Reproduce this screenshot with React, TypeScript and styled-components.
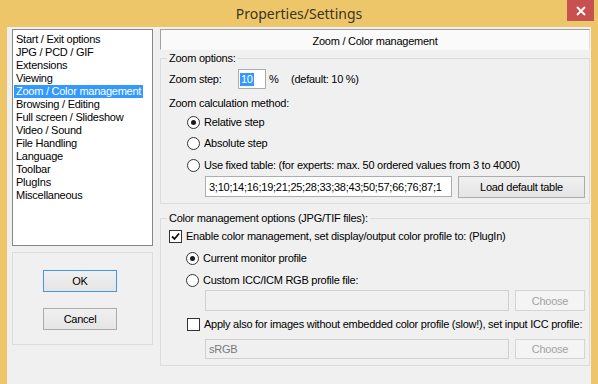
import React from "react";
import styled, { createGlobalStyle } from "styled-components";

const Global = createGlobalStyle`
  html, body { margin: 0; padding: 0; background: #ffffff; }
  body { font-family: "Liberation Sans", Arial, sans-serif; font-size: 11px; letter-spacing: -0.25px; color: #000; }
  * { box-sizing: border-box; }
`;

const Window = styled.div`
  width: 598px;
  height: 384px;
  overflow: hidden;
  display: flex;
  flex-direction: column;
  background: #eec66a;
`;

const TitleBar = styled.div`
  height: 27px;
  flex: none;
  display: grid;
  grid-template-columns: 1fr auto 1fr;
  align-items: start;
`;

const Title = styled.div`
  grid-column: 2;
  font-family: "Noto Sans", "Open Sans", sans-serif;
  font-size: 14px;
  letter-spacing: 0;
  line-height: 27px;
  color: #3c3522;
`;

const CloseButton = styled.div`
  grid-column: 3;
  justify-self: end;
  width: 27px;
  height: 21px;
  margin-right: 4px;
  background: #c75050;
  display: flex;
  align-items: center;
  justify-content: center;
`;

const Body = styled.div`
  flex: 1;
  margin: 0 7px;
  background: #f0f0f0;
  display: flex;
  gap: 7px;
  padding: 2px 0 0 5px;
`;

const LeftCol = styled.div`
  width: 141px;
  display: flex;
  flex-direction: column;
  gap: 6px;
`;

const ListBox = styled.div`
  height: 217px;
  background: #ffffff;
  border: 1px solid #828790;
  padding: 3px 0 0 1px;
  display: flex;
  flex-direction: column;
`;

const ListItem = styled.div<{ $selected?: boolean }>`
  width: fit-content;
  height: 13px;
  line-height: 13px;
  padding: 0 2px;
  white-space: nowrap;
  background: ${(p) => (p.$selected ? "#3399ff" : "transparent")};
  color: ${(p) => (p.$selected ? "#ffffff" : "#000000")};
`;

const ButtonGroup = styled.div`
  height: 93px;
  border: 1px solid #dcdcdc;
  display: flex;
  flex-direction: column;
  align-items: flex-start;
  gap: 16px;
  padding: 17px 0 0 30px;
`;

const Button = styled.button<{ $w: number; $h?: number; $default?: boolean; $disabled?: boolean }>`
  width: ${(p) => p.$w}px;
  height: ${(p) => p.$h ?? 22}px;
  flex: none;
  margin: 0;
  padding: 0;
  font: inherit;
  font-size: 11px;
  letter-spacing: -0.25px;
  color: ${(p) => (p.$disabled ? "#a3a3a3" : "#000000")};
  border: 1px solid ${(p) => (p.$default ? "#3c9ae6" : p.$disabled ? "#d5d5d5" : "#acacac")};
  background: ${(p) =>
    p.$disabled ? "#f4f4f4" : "linear-gradient(#f0f0f0, #e5e5e5)"};
  display: flex;
  align-items: center;
  justify-content: center;
`;

const RightCol = styled.div`
  width: 430px;
  display: flex;
  flex-direction: column;
`;

const PageHeader = styled.div`
  height: 21px;
  border: 1px solid;
  border-color: #a0a0a0 #e0e0e0 #f8f8f8 #a0a0a0;
  background: #fafafa;
  display: flex;
  justify-content: center;
  align-items: center;
  padding-top: 2px;
`;

const GroupBox = styled.div<{ $mt: number; $pb: number }>`
  position: relative;
  margin-top: ${(p) => p.$mt}px;
  border: 1px solid #dcdcdc;
  padding: 0 0 ${(p) => p.$pb}px 8px;
  display: flex;
  flex-direction: column;
`;

const GroupTitle = styled.span`
  position: absolute;
  top: -7px;
  left: 6px;
  padding: 0 2px;
  line-height: 13px;
  background: #f0f0f0;
  white-space: nowrap;
`;

const Row = styled.div<{ $h: number; $mt?: number; $indent?: number }>`
  display: flex;
  align-items: center;
  height: ${(p) => p.$h}px;
  margin-top: ${(p) => p.$mt ?? 0}px;
  padding-left: ${(p) => p.$indent ?? 0}px;
  white-space: nowrap;
`;

const FieldLabel = styled.span<{ $w?: number }>`
  width: ${(p) => (p.$w ? `${p.$w}px` : "auto")};
  flex: none;
`;

const Field = styled.div<{ $w: number; $h?: number; $disabled?: boolean }>`
  width: ${(p) => p.$w}px;
  height: ${(p) => p.$h ?? 21}px;
  flex: none;
  border: 1px solid ${(p) => (p.$disabled ? "#d0d0d0" : "#abadb3")};
  background: ${(p) => (p.$disabled ? "#f0f0f0" : "#ffffff")};
  color: ${(p) => (p.$disabled ? "#7a7a7a" : "#000000")};
  padding-left: 3px;
  display: flex;
  align-items: center;
  overflow: hidden;
  white-space: nowrap;
`;

const Selected = styled.span`
  background: #3399ff;
  color: #ffffff;
  line-height: 13px;
  padding: 0 1px;
  margin-left: -2px;
`;

const RadioCircle = styled.span<{ $checked?: boolean }>`
  width: 13px;
  height: 13px;
  flex: none;
  border-radius: 50%;
  border: 1px solid #333333;
  background: #ffffff;
  display: inline-flex;
  align-items: center;
  justify-content: center;
  margin-right: 4px;
  &::after {
    content: "";
    width: 5px;
    height: 5px;
    border-radius: 50%;
    background: ${(p) => (p.$checked ? "#1a1a1a" : "transparent")};
  }
`;

const CheckBox = styled.span`
  width: 13px;
  height: 13px;
  flex: none;
  border: 1px solid #333333;
  background: #ffffff;
  display: inline-flex;
  align-items: center;
  justify-content: center;
  margin-right: 4px;
`;

const Spacer = styled.span<{ $w: number }>`
  width: ${(p) => p.$w}px;
  flex: none;
`;

const Radio = ({ checked, children }: { checked?: boolean; children: React.ReactNode }) => (
  <>
    <RadioCircle $checked={checked} />
    <span>{children}</span>
  </>
);

const Check = ({ checked, children }: { checked?: boolean; children: React.ReactNode }) => (
  <>
    <CheckBox>
      {checked && (
        <svg width="9" height="9" viewBox="0 0 9 9">
          <path d="M1 4.5 L3.5 7 L8 1.5" fill="none" stroke="#111" strokeWidth="1.8" />
        </svg>
      )}
    </CheckBox>
    <span>{children}</span>
  </>
);

const items = [
  "Start / Exit options",
  "JPG / PCD / GIF",
  "Extensions",
  "Viewing",
  "Zoom / Color management",
  "Browsing / Editing",
  "Full screen / Slideshow",
  "Video / Sound",
  "File Handling",
  "Language",
  "Toolbar",
  "PlugIns",
  "Miscellaneous",
];

export default function App() {
  return (
    <Window>
      <Global />
      <TitleBar>
        <Title>Properties/Settings</Title>
        <CloseButton>
          <svg width="10" height="10" viewBox="0 0 10 10">
            <path d="M1 1 L9 9 M9 1 L1 9" stroke="#ffffff" strokeWidth="1.8" />
          </svg>
        </CloseButton>
      </TitleBar>
      <Body>
        <LeftCol>
          <ListBox>
            {items.map((it) => (
              <ListItem key={it} $selected={it === "Zoom / Color management"}>
                {it}
              </ListItem>
            ))}
          </ListBox>
          <ButtonGroup>
            <Button $w={74} $default>OK</Button>
            <Button $w={74}>Cancel</Button>
          </ButtonGroup>
        </LeftCol>
        <RightCol>
          <PageHeader>Zoom / Color management</PageHeader>
          <GroupBox $mt={8} $pb={6}>
            <GroupTitle>Zoom options:</GroupTitle>
            <Row $h={22} $mt={9}>
              <FieldLabel $w={69}>Zoom step:</FieldLabel>
              <Field $w={28} $h={20}>
                <Selected>10</Selected>
              </Field>
              <Spacer $w={3} />
              <FieldLabel $w={22}>%</FieldLabel>
              <FieldLabel>(default: 10 %)</FieldLabel>
            </Row>
            <Row $h={18} $mt={4}>Zoom calculation method:</Row>
            <Row $h={20} $indent={18}>
              <Radio checked>Relative step</Radio>
            </Row>
            <Row $h={20} $mt={1} $indent={18}>
              <Radio>Absolute step</Radio>
            </Row>
            <Row $h={20} $mt={2} $indent={18}>
              <Radio>Use fixed table: (for experts: max. 50 ordered values from 3 to 4000)</Radio>
            </Row>
            <Row $h={21} $mt={1} $indent={36}>
              <Field $w={247}>3;10;14;16;19;21;25;28;33;38;43;50;57;66;76;87;1</Field>
              <Spacer $w={6} />
              <Button $w={127} $h={22}>Load default table</Button>
            </Row>
          </GroupBox>
          <GroupBox $mt={14} $pb={6}>
            <GroupTitle>Color management options (JPG/TIF files):</GroupTitle>
            <Row $h={20} $mt={7}>
              <Check checked>Enable color management, set display/output color profile to: (PlugIn)</Check>
            </Row>
            <Row $h={20} $mt={2} $indent={17}>
              <Radio checked>Current monitor profile</Radio>
            </Row>
            <Row $h={18} $mt={3} $indent={17}>
              <Radio>Custom ICC/ICM RGB profile file:</Radio>
            </Row>
            <Row $h={21} $mt={1} $indent={36}>
              <Field $w={304} $disabled />
              <Spacer $w={6} />
              <Button $w={70} $h={21} $disabled>Choose</Button>
            </Row>
            <Row $h={20} $mt={3} $indent={18}>
              <Check>Apply also for images without embedded color profile (slow!), set input ICC profile:</Check>
            </Row>
            <Row $h={20} $mt={5} $indent={36}>
              <Field $w={304} $h={20} $disabled>sRGB</Field>
              <Spacer $w={6} />
              <Button $w={70} $h={20} $disabled>Choose</Button>
            </Row>
          </GroupBox>
        </RightCol>
      </Body>
    </Window>
  );
}
